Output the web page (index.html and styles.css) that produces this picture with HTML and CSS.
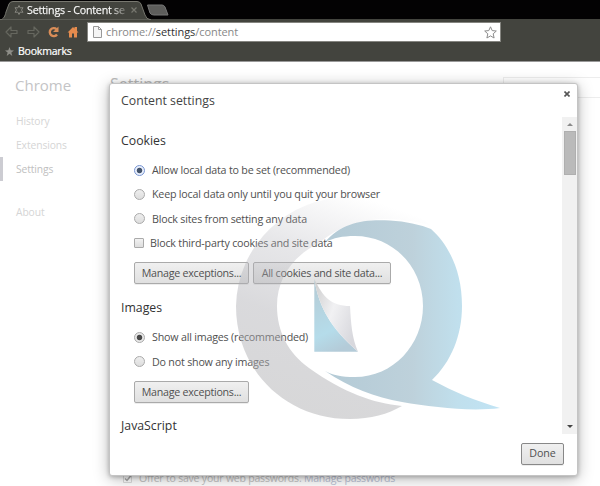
FILE: index.html
```
<!DOCTYPE html>
<html lang="en">
<head>
<meta charset="utf-8">
<title>Settings - Content settings</title>
<link rel="stylesheet" href="styles.css">
</head>
<body>
<header class="browser">
  <div class="tabstrip">
    <svg class="tabshape" width="172" height="20" viewBox="0 0 172 20"><path d="M0 20C4 19 5 16 6 12L9 4Q10 1.500 13 1.500H137Q140 1.500 141 4L145 15Q146 19 151 20Z" fill="#43443e" stroke="#77776f"/><path d="M147.500 5H162Q164 5 165 7L168 15H154Q151 15 150 13Z" fill="#5d5d5b" stroke="#777"/></svg>
    <div class="tab">
      <svg width="10" height="10" viewBox="0 0 10 10" fill="none" stroke="#85857e" stroke-width="1"><path d="M5 .5L6.200 2.900L9 2.700L7.500 5L9 7.300L6.200 7.100L5 9.500L3.800 7.100L1 7.300L2.500 5L1 2.700L3.800 2.900Z"/></svg>
      <span class="tabtitle">Settings - Content se</span>
      <svg class="tabclose" width="6" height="6" viewBox="0 0 6 6" stroke="#77776f" stroke-width="1.200"><path d="M.5 .5L5.500 5.500M5.500 .5L.5 5.500"/></svg>
    </div>
  </div>
  <div class="toolbar">
    <svg class="nav" width="82" height="14" viewBox="0 0 82 14" fill="none">
      <g stroke="#66675f" stroke-width="1.200" stroke-linejoin="round"><path d="M1 7L6 2V5.500H12V8.500H6V12Z"/><path d="M34 7L29 2V5.500H23V8.500H29V12Z"/></g>
      <path d="M51.500 4.200A4 4 0 1 0 52 9.500" stroke="#d98d58" stroke-width="2.400"/><path d="M48 7H53.500V1.500Z" fill="#d98d58"/>
      <path d="M62.500 7.500L68 2L69.500 3.500V2H72V6L73.500 7.500H72V12.500H69V8.500H67V12.500H64V7.500Z" fill="#e58b4e"/>
    </svg>
    <div class="address">
      <svg width="9" height="12" viewBox="0 0 9 12" fill="#f5f5f5" stroke="#999"><path d="M.5 .5H5.500L8.500 3.500V11.500H.5ZM5.500 .5V3.500H8.500"/></svg>
      <span class="url">chrome://<b>settings</b>/content</span>
      <svg class="star" width="13" height="13" viewBox="0 0 13 13" fill="none" stroke="#8c8c8c"><path d="M6.500 .8L8.200 4.600L12.300 5L9.200 7.800L10.100 12L6.500 9.900L2.900 12L3.800 7.800L.7 5L4.800 4.600Z"/></svg>
    </div>
  </div>
  <div class="bookmarks">
    <svg width="9" height="9" viewBox="0 0 13 13" fill="#8e8e88"><path d="M6.500 0L8.200 4.600L13 5L9.200 7.800L10.500 13L6.500 9.900L2.500 13L3.800 7.800L0 5L4.800 4.600Z"/></svg>
    <span>Bookmarks</span>
  </div>
</header>
<main class="page">
  <nav class="side">
    <div class="brand">Chrome</div>
    <a>History</a>
    <a>Extensions</a>
    <a class="current">Settings</a>
    <a class="about">About</a>
  </nav>
  <section class="behind">
    <div class="behind-top"><h1>Settings</h1><div class="search"></div></div>
    <div class="password"><svg width="9" height="9" viewBox="0 0 9 9" fill="none"><path d="M.5 .5H8.500V8.500H.5Z" stroke="#ddd"/><path d="M2 4.500L4 6.500L8 1.500" stroke="#aaa" stroke-width="1.500"/></svg><span>Offer to save your web passwords. <i>Manage passwords</i></span></div>
  </section>
  <section class="dialog">
    <div class="dialog-head"><h2>Content settings</h2><svg class="close" width="6" height="6" viewBox="0 0 6 6" stroke="#555" stroke-width="1.600"><path d="M.5 .5L5.500 5.500M5.500 .5L.5 5.500"/></svg></div>
    <div class="scroll">
      <div class="content">
        <h3>Cookies</h3>
        <div class="option"><span class="radio on focus"></span><span>Allow local data to be set (recommended)</span></div>
        <div class="option"><span class="radio"></span><span>Keep local data only until you quit your browser</span></div>
        <div class="option"><span class="radio"></span><span>Block sites from setting any data</span></div>
        <div class="option check"><span class="box"></span><span>Block third-party cookies and site data</span></div>
        <div class="buttons"><span class="btn manage">Manage exceptions...</span><span class="btn cookies">All cookies and site data...</span></div>
        <h3 class="images">Images</h3>
        <div class="option"><span class="radio on"></span><span>Show all images (recommended)</span></div>
        <div class="option"><span class="radio"></span><span>Do not show any images</span></div>
        <div class="buttons"><span class="btn manage">Manage exceptions...</span></div>
        <h3 class="js">JavaScript</h3>
      </div>
      <div class="bar"><i class="up"></i><i class="thumb"></i><i class="down"></i></div>
    </div>
    <div class="foot"><span class="btn done">Done</span></div>
    <svg class="mark" width="270" height="230" viewBox="232 193 270 230">
      <defs>
        <linearGradient id="g" x1=".65" y1="0" x2=".35" y2="1"><stop offset="0" stop-color="#b4b4bc" stop-opacity="0"/><stop offset=".3" stop-color="#b4b4bb" stop-opacity=".32"/><stop offset=".6" stop-color="#aaaab0" stop-opacity=".44"/><stop offset="1" stop-color="#b2b2b4" stop-opacity=".52"/></linearGradient>
        <linearGradient id="b" gradientUnits="userSpaceOnUse" x1="325" x2="500" y1="0" y2="0"><stop offset="0" stop-color="#8baec0" stop-opacity=".65"/><stop offset=".5" stop-color="#86aabc" stop-opacity=".54"/><stop offset=".76" stop-color="#86c2dc" stop-opacity=".52"/><stop offset="1" stop-color="#98d2ee" stop-opacity=".6"/></linearGradient>
        <linearGradient id="p" x1=".2" y1="0" x2=".5" y2="1"><stop offset="0" stop-color="#b5cbd5"/><stop offset=".7" stop-color="#b5dcea"/><stop offset="1" stop-color="#b4cbd8"/></linearGradient>
        <linearGradient id="c" x1="0" y1="0" x2="1" y2=".6"><stop offset="0" stop-color="#ccc"/><stop offset=".5" stop-color="#f1f1f3"/><stop offset="1" stop-color="#d8d8dd"/></linearGradient>
      </defs>
      <path d="M430 225C408 205 384 197 350 197A113 111 0 0 0 236 306C236 370 285 419 350 419C371 419 388 414 402 406C373 403 344 393 309 368C288 353 277 331 277 306C277 278 293 256 319 243C349 217 388 214 430 225Z" fill="url(#g)"/>
      <path d="M325 242C342 223 362 219 390 220.500Q414 222 431 229C448 244 462 270 462 306C462 336 451 362 432 380C454 392 476 401 500 408C470 412 432 407 402 402C375 397 350 388 325 371C333 375 341 377 355 377C393 377 423 345 423 306C423 267 393 236 355 236C342 236 334 238 325 242Z" fill="url(#b)"/>
      <path d="M314.300 279C319 308 331 328 358 351.700H314.300Z" fill="url(#p)"/>
      <path d="M314.300 279C323 297 331 306 350 306C351 324 352 338 358 351.700C331 328 319 308 314.300 279Z" fill="url(#c)"/>
    </svg>
  </section>
</main>
</body>
</html>
```
FILE: styles.css
```
* { box-sizing: border-box; }
body { margin: 0; width: 600px; height: 486px; overflow: hidden; background: #fff; font-family: "Open Sans", "Noto Sans", sans-serif; font-size: 11px; color: #505050; }
svg { flex: none; }
span { white-space: nowrap; }
h1, h2, h3 { margin: 0; font-weight: 400; }

.browser { height: 62px; background: #43443e; border-bottom: 1px solid #999; }
.tabstrip { position: relative; height: 19px; background: #030203; }
.tabshape { position: absolute; left: 0; top: 0; }
.tab { position: relative; display: flex; align-items: center; height: 20px; padding-left: 14px; }
.tabtitle { width: 99px; margin-left: 3px; overflow: hidden; color: transparent; background: linear-gradient(90deg, #fff 84%, #66665f 100%); background-clip: text; font-size: 10.7px; letter-spacing: -.22px; -webkit-text-stroke: .25px transparent; }
.tabclose { margin-left: 5px; }
.toolbar { display: flex; height: 25px; align-items: center; }
.nav { margin: 0 0 0 5px; }
.address { display: flex; align-items: center; width: 414px; height: 20px; padding: 0 3px 0 5px; border: 1px solid #858580; background: #fff; margin-top: 1px; }
.url { margin: -2px 0 0 4px; font-size: 11px; letter-spacing: -.07px; color: #888; }
.url b { font-weight: 400; color: #333; }
.star { margin-left: auto; }
.bookmarks { display: flex; align-items: center; height: 14px; padding-left: 5px; gap: 4px; color: #fff; font-size: 10.5px; letter-spacing: -.2px; -webkit-text-stroke: .2px #fff; }

.page { position: relative; display: flex; height: 424px; }
.side { width: 109px; color: #d5d5d5; }
.brand { height: 47px; padding: 13px 0 0 15px; font-size: 15px; line-height: 21px; color: #c4c4c6; }
.side a { display: block; height: 24px; padding-left: 16px; line-height: 24px; font-size: 10.3px; letter-spacing: -.1px; }
.side .current { border-left: 3px solid #ccccd2; padding-left: 13px; color: #c0c0c0; }
.side .about { margin-top: 19px; }
.behind { display: flex; flex: 1; flex-direction: column; justify-content: space-between; }
.behind-top { display: flex; justify-content: space-between; }
h1 { padding: 10px 0 0 1px; font-size: 16px; line-height: 24px; color: #bbb; }
.search { width: 97px; height: 21px; margin-top: 15px; border: 1px solid #ededed; border-right: 0; }
.password { display: flex; align-items: center; height: 16px; gap: 7px; padding-left: 14px; color: #c4c4c4; font-size: 10.5px; letter-spacing: -.2px; }
.password i { font-style: normal; color: #bcc3d6; }

.dialog { position: absolute; left: 109px; top: 21px; display: flex; flex-direction: column; width: 469px; height: 393px; background: #fff; border: 1px solid #c4c4c4; border-radius: 3px; box-shadow: 0 3px 16px rgba(0,0,0,.28), 0 1px 4px rgba(0,0,0,.25); }
.dialog-head { display: flex; justify-content: space-between; height: 33px; padding: 7px 7px 0 11px; }
h2 { font-size: 12.3px; line-height: 19px; color: #444; }
.scroll { display: flex; height: 317px; }
.content { flex: 1; padding-left: 11px; overflow: hidden; }
h3 { margin-top: 14px; height: 27px; font-size: 12.3px; line-height: 20px; color: #333; }
h3.images { margin-top: 14px; }
h3.js { margin-top: 13px; }
.option { display: flex; align-items: center; height: 24.3px; padding-left: 13px; gap: 7px; font-size: 10.7px; letter-spacing: -.2px; }
.radio { width: 11px; height: 11px; border: 1px solid #aaa; border-radius: 50%; background: linear-gradient(#eee, #ddd); }
.radio.on { background: radial-gradient(circle, #484848 0 2.3px, #e8e8e8 3.2px); }
.radio.focus { border-color: #7895d2; background: radial-gradient(circle, #44536a 0 2.3px, #eaf0fc 3.2px); }
.box { width: 10px; height: 10px; margin-right: -1px; border: 1px solid #aaa; border-radius: 1px; background: linear-gradient(#f2f2f2, #ddd); }
.buttons { display: flex; gap: 4px; margin: 7px 0 0 13px; height: 22px; }
.btn { display: flex; align-items: center; justify-content: center; height: 22px; border: 1px solid #aaa; border-radius: 2px; background: linear-gradient(#f0f0f0, #e0e0e0); box-shadow: 0 1px 0 rgba(0,0,0,.07); color: #505050; font-size: 10.7px; letter-spacing: -.26px; }
.manage { width: 115px; }
.cookies { width: 138px; }
.bar { display: flex; flex-direction: column; align-items: center; width: 15px; background: #f1f1f1; }
.up { margin-top: 6px; border: 3px solid transparent; border-top: 0; border-bottom: 3px solid #8b8b8b; }
.thumb { width: 12px; height: 44px; margin-top: 5px; background: #bababa; border: 1px solid #afafaf; }
.down { margin: auto 0 6px; border: 3px solid transparent; border-bottom: 0; border-top: 3px solid #444; }
.foot { display: flex; justify-content: flex-end; padding: 9px 13px 0 0; }
.done { width: 43px; border-color: #888; line-height: 18px; padding-bottom: 2px; letter-spacing: -.1px; }
.mark { position: absolute; left: 122px; top: 109px; pointer-events: none; }
```
